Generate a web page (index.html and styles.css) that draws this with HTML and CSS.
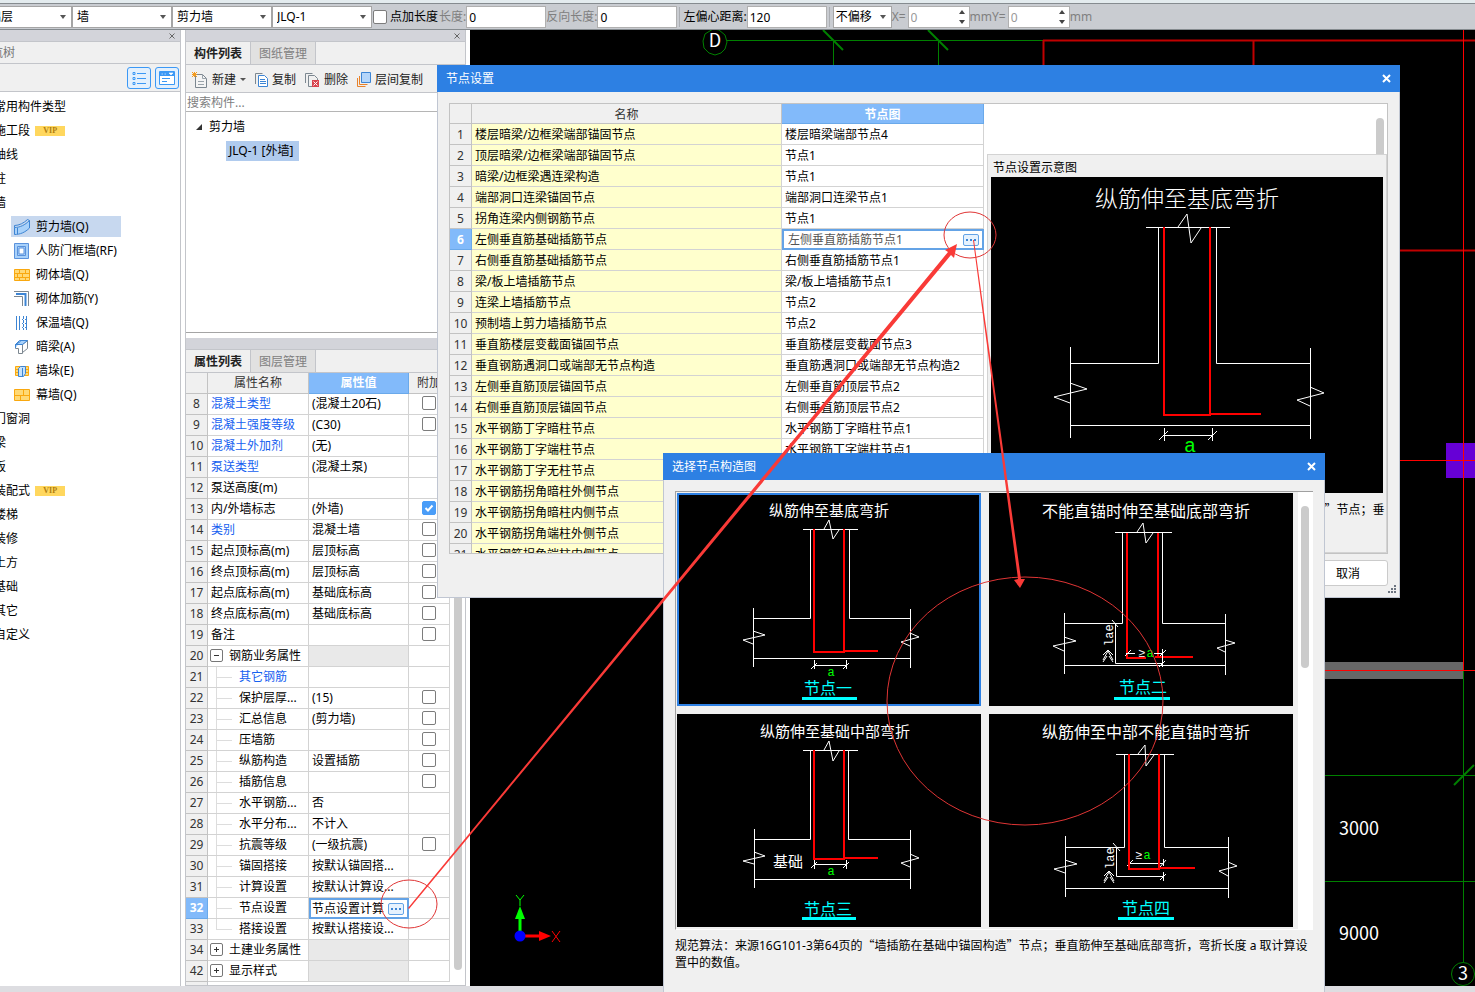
FILE: index.html
```html
<!DOCTYPE html>
<html lang="zh-CN">
<head>
    <meta charset="utf-8">
    <title>节点设置</title>
    <link rel="stylesheet" href="styles.css">
</head>
<body>
    <div class="toolbar">
        <select class="combo" aria-label="楼层"><option>基础层</option></select>
        <select class="combo" aria-label="构件大类"><option>墙</option></select>
        <select class="combo" aria-label="构件类型"><option>剪力墙</option></select>
        <select class="combo" aria-label="构件"><option>JLQ-1</option></select>
        <label class="tick-label"><input type="checkbox" class="tick">点加长度</label>
        <label class="field off">长度:<input type="text" value="0"></label>
        <label class="field off">反向长度:<input type="text" value="0"></label>
        <span class="sep"></span>
        <label class="field">左偏心距离:<input type="text" value="120"></label>
        <span class="sep"></span>
        <select class="combo combo-small" aria-label="偏移"><option>不偏移</option></select>
        <label class="field off">X=<input type="text" class="spin" value="0"></label>
        <label class="field off">mmY=<input type="text" class="spin" value="0"></label>
        <span class="off">mm</span>
    </div>

    <div class="workspace">
        <nav class="dock nav">
            <div class="dock-bar"><button class="dock-close" aria-label="关闭"><svg width="6" height="6"><path d="M0.5 0.5L5.5 5.5M5.5 0.5L0.5 5.5"/></svg></button></div>
            <div class="dock-title">导航树</div>
            <div class="nav-tools">
                <button class="view-btn" aria-label="列表"><svg width="14" height="16" viewBox="0 0 14 16"><path d="M1 2.5h2v2h-2zM1 7.5h2v2h-2zM1 12.5h2v2h-2zM5 3.5h9M5 8.5h9M5 13.5h9" fill="none" stroke="#3b98f5"/></svg></button>
                <button class="view-btn" aria-label="面板"><svg width="16" height="14" viewBox="0 0 16 14"><path d="M.5 .5h15v13h-15z" fill="#fff" stroke="#3b98f5"/><path d="M1 1h14v4H1z" fill="#3b98f5"/><path d="M2.500 3h1.500M5.500 3h1.500M10 2h4l-2 2z" stroke="#fff" fill="#fff" stroke-width=".6"/><path d="M3 7.500h8M3 10.500h5" stroke="#3b98f5"/></svg></button>
            </div>
            <ul class="nav-list">
                <li>常用构件类型</li>
                <li>施工段 <b class="vip">VIP</b></li>
                <li>轴线</li>
                <li class="one">柱</li>
                <li class="one">墙</li>
                <li class="sub selected"><a href="#"><svg width="16" height="16" viewBox="0 0 16 16"><path d="M.5 8.500C6 8.500 11 6 15.500 1.500V9C11 13.500 6 15.500 .5 15.500z" fill="#a8d1fa" stroke="#3d85d4"/><path d="M.5 8.500v-2C5 6.500 10 4 13.500 .5l2 1M3.500 9v6" fill="none" stroke="#3d85d4"/></svg>剪力墙(Q)</a></li>
                <li class="sub"><a href="#"><svg width="16" height="16" viewBox="0 0 16 16"><path d="M.5 .5h14v15H.5z" fill="#a8d1fa" stroke="#5a92dc"/><path d="M3.500 3.500h8v9h-8z" fill="#a8d1fa" stroke="#5a92dc"/><path d="M5 5h5v6H5z" fill="#fff" stroke="#5a92dc"/></svg>人防门框墙(RF)</a></li>
                <li class="sub"><a href="#"><svg width="16" height="16" viewBox="0 0 16 16"><path d="M.5 2.500h15v11H.5z" fill="#ffd975" stroke="#f9a80f"/><path d="M0 6.500h16M0 10.500h16M5.500 2v4M11.500 2v4M3.500 6v4M8.500 6v4M5.500 10v4M11.500 10v4" stroke="#f9a80f"/></svg>砌体墙(Q)</a></li>
                <li class="sub"><a href="#"><svg width="16" height="16" viewBox="0 0 16 16"><path d="M0 .5h14.500V15M0 5.500h8.500V15" fill="none" stroke="#7c8790"/><path d="M2 3h9.500V15" fill="none" stroke="#3d85d4" stroke-width="2"/></svg>砌体加筋(Y)</a></li>
                <li class="sub"><a href="#"><svg width="16" height="16" viewBox="0 0 16 16"><path d="M2.500 1v14M12.500 1v14" stroke="#3d85d4"/><path d="M5.500 1v14M9.500 1v14" stroke="#3d85d4" stroke-dasharray="3 1"/><path d="M2 4.500h11M2 8.500h11M2 12.500h11" stroke="#3d85d4" stroke-dasharray="1 2"/></svg>保温墙(Q)</a></li>
                <li class="sub"><a href="#"><svg width="16" height="16" viewBox="0 0 16 16"><path d="M1.500 5.500h7v9h-4v-5h-3zM8.500 5.500l5-4v8l-5 4" fill="#fff" stroke="#7c8790"/><path d="M1.500 9V5.500l4-4h8l-5 4h-7l5-3" fill="#a8d1fa" stroke="#3d85d4"/></svg>暗梁(A)</a></li>
                <li class="sub"><a href="#"><svg width="16" height="16" viewBox="0 0 16 16"><path d="M1.500 3.500h13v9h-13z" fill="#ffd975" stroke="#f9a80f"/><path d="M1 6.500h14M1 9.500h14" stroke="#f9a80f"/><path d="M4.500 5.500l2-2h5v7l-2 3h-5zM8.500 5v8" fill="#c6e2fc" stroke="#3d85d4"/></svg>墙垛(E)</a></li>
                <li class="sub"><a href="#"><svg width="16" height="16" viewBox="0 0 16 16"><path d="M.5 2.500h15v11H.5z" fill="#ffd975" stroke="#f9a80f"/><path d="M0 8.500h16M9.500 2v6M6.500 8v6" stroke="#f9a80f"/></svg>幕墙(Q)</a></li>
                <li>门窗洞</li>
                <li class="one">梁</li>
                <li class="one">板</li>
                <li>装配式 <b class="vip">VIP</b></li>
                <li>楼梯</li>
                <li>装修</li>
                <li>土方</li>
                <li>基础</li>
                <li>其它</li>
                <li>自定义</li>
            </ul>
        </nav>

        <div class="column">
            <section class="dock">
                <div class="dock-bar"><button class="dock-close" aria-label="关闭"><svg width="6" height="6"><path d="M0.5 0.5L5.5 5.5M5.5 0.5L0.5 5.5"/></svg></button></div>
                <div class="tabs"><button class="tab active">构件列表</button><button class="tab">图纸管理</button></div>
                <div class="list-tools">
                    <button><svg width="16" height="16" viewBox="0 0 16 16"><path d="M3.500 2.500h7l4 4v9h-11z" fill="#f4f4f4" stroke="#7c8790"/><path d="M10.500 2.500v4h4M6 9.500h6M6 12.500h6" fill="none" stroke="#9aa3aa"/><path d="M0 0l5 5M5 0L0 5M2.500 0v5M0 2.500h5" stroke="#f39a1e"/></svg>新建<i class="caret"></i></button>
                    <button><svg width="13" height="16" viewBox="0 0 13 16"><path d="M.5 12V1.500h7" fill="none" stroke="#7c8790"/><path d="M3.500 3.500h6l3 3v8h-9z" fill="#fff" stroke="#3d85d4"/><path d="M5 7.500h5M5 9.500h6M5 11.500h6" stroke="#3d85d4"/></svg>复制</button>
                    <button><svg width="15" height="16" viewBox="0 0 15 16"><path d="M.5 11V1.500h7M7 14.500H3.500v-11h6l3 3V8" fill="none" stroke="#7c8790"/><path d="M7 8h7v7H7z" fill="#d9434e"/><path d="M8.500 9.500l4 4M12.500 9.500l-4 4" stroke="#fff"/></svg>删除</button>
                    <button><svg width="14" height="16" viewBox="0 0 14 16"><path d="M4.500 .5h9v10h-9z" fill="#b5d6fa" stroke="#3d85d4"/><path d="M2.500 4v8.500h8M.5 6v8.500h8" fill="none" stroke="#e8822b"/></svg>层间复制</button>
                </div>
                <input type="text" class="search" placeholder="搜索构件..." aria-label="搜索构件">
                <ul class="tree">
                    <li><i class="open"></i>剪力墙</li>
                    <li class="leaf"><span>JLQ-1 [外墙]</span></li>
                </ul>
            </section>

            <section class="dock props">
                <div class="dock-bar"></div>
                <div class="tabs"><button class="tab active">属性列表</button><button class="tab">图层管理</button></div>
                <div class="props-body">
                    <table class="grid">
                        <colgroup><col class="c-num"><col class="c-name"><col class="c-value"><col class="c-extra"></colgroup>
                        <thead><tr><th></th><th>属性名称</th><th class="current">属性值</th><th>附加</th></tr></thead>
                        <tbody>
                            <tr><th>8</th><td class="link">混凝土类型</td><td>(混凝土20石)</td><td><input type="checkbox" class="tick" aria-label="附加 8"></td></tr>
                            <tr><th>9</th><td class="link">混凝土强度等级</td><td>(C30)</td><td><input type="checkbox" class="tick" aria-label="附加 9"></td></tr>
                            <tr><th>10</th><td class="link">混凝土外加剂</td><td>(无)</td><td></td></tr>
                            <tr><th>11</th><td class="link">泵送类型</td><td>(混凝土泵)</td><td></td></tr>
                            <tr><th>12</th><td>泵送高度(m)</td><td></td><td></td></tr>
                            <tr><th>13</th><td>内/外墙标志</td><td>(外墙)</td><td><input type="checkbox" class="tick" checked aria-label="附加 13"></td></tr>
                            <tr><th>14</th><td class="link">类别</td><td>混凝土墙</td><td><input type="checkbox" class="tick" aria-label="附加 14"></td></tr>
                            <tr><th>15</th><td>起点顶标高(m)</td><td>层顶标高</td><td><input type="checkbox" class="tick" aria-label="附加 15"></td></tr>
                            <tr><th>16</th><td>终点顶标高(m)</td><td>层顶标高</td><td><input type="checkbox" class="tick" aria-label="附加 16"></td></tr>
                            <tr><th>17</th><td>起点底标高(m)</td><td>基础底标高</td><td><input type="checkbox" class="tick" aria-label="附加 17"></td></tr>
                            <tr><th>18</th><td>终点底标高(m)</td><td>基础底标高</td><td><input type="checkbox" class="tick" aria-label="附加 18"></td></tr>
                            <tr><th>19</th><td>备注</td><td></td><td><input type="checkbox" class="tick" aria-label="附加 19"></td></tr>
                            <tr class="group"><th>20</th><td><button class="fold minus" aria-label="收起"></button>钢筋业务属性</td><td></td><td></td></tr>
                            <tr class="child"><th>21</th><td class="link">其它钢筋</td><td></td><td></td></tr>
                            <tr class="child"><th>22</th><td>保护层厚...</td><td>(15)</td><td><input type="checkbox" class="tick" aria-label="附加 22"></td></tr>
                            <tr class="child"><th>23</th><td>汇总信息</td><td>(剪力墙)</td><td><input type="checkbox" class="tick" aria-label="附加 23"></td></tr>
                            <tr class="child"><th>24</th><td>压墙筋</td><td></td><td><input type="checkbox" class="tick" aria-label="附加 24"></td></tr>
                            <tr class="child"><th>25</th><td>纵筋构造</td><td>设置插筋</td><td><input type="checkbox" class="tick" aria-label="附加 25"></td></tr>
                            <tr class="child"><th>26</th><td>插筋信息</td><td></td><td><input type="checkbox" class="tick" aria-label="附加 26"></td></tr>
                            <tr class="child"><th>27</th><td>水平钢筋...</td><td>否</td><td></td></tr>
                            <tr class="child"><th>28</th><td>水平分布...</td><td>不计入</td><td></td></tr>
                            <tr class="child"><th>29</th><td>抗震等级</td><td>(一级抗震)</td><td><input type="checkbox" class="tick" aria-label="附加 29"></td></tr>
                            <tr class="child"><th>30</th><td>锚固搭接</td><td>按默认锚固搭...</td><td></td></tr>
                            <tr class="child"><th>31</th><td>计算设置</td><td>按默认计算设...</td><td></td></tr>
                            <tr class="child"><th class="current">32</th><td>节点设置</td><td class="editing"><div class="editor"><span>节点设置计算</span><button class="more" aria-label="更多"></button></div></td><td></td></tr>
                            <tr class="child last"><th>33</th><td>搭接设置</td><td>按默认搭接设...</td><td></td></tr>
                            <tr class="group"><th>34</th><td><button class="fold" aria-label="展开"></button>土建业务属性</td><td></td><td></td></tr>
                            <tr class="group"><th>42</th><td><button class="fold" aria-label="展开"></button>显示样式</td><td></td><td></td></tr>
                        </tbody>
                    </table>
                    <div class="scroll"><i></i></div>
                </div>
            </section>
        </div>

        <main class="canvas">
            <svg width="100%" height="100%">
                <g fill="none" stroke="#008000">
                    <path d="M257 10.500H573M363.500 10V60M468.500 10V60" stroke-width="1"/>
                    <path d="M353 0l20 20M458 0l20 20" stroke-width="2"/>
                    <path d="M855 745.500h150M855 851.500h150M993.500 641V932"/>
                    <path d="M984 755l20-20" stroke-width="2"/>
                    <path d="M243 -1l6 1 6 5 2 7-2 7-4 4-6 2-6-2-5-5-1-7 2-7z"/>
                    <circle cx="993" cy="944" r="11.500"/>
                </g>
                <path d="M855 632h138v17H855z" fill="#666"/>
                <path d="M976 413h29v35h-29z" fill="#6600d6"/>
                <path d="M573 10.500h432M573.500 10v50M783.500 10v50M930 220.500h75" stroke="#c00000" stroke-width="2" fill="none"/>
                <path d="M993.500 0V641M930 430.500h75M855 640.500h150" stroke="#f00" fill="none"/>
                <g class="cad-label">
                    <text x="245" y="17" text-anchor="middle">D</text>
                    <text x="869" y="805">3000</text>
                    <text x="869" y="910">9000</text>
                    <text x="993" y="950" text-anchor="middle">3</text>
                </g>
                <path d="M50 906V888" stroke="#0f0" stroke-width="3"/><path d="M45 889l5-13 5 13z" fill="#0f0"/>
                <path d="M50 906h20" stroke="#f00" stroke-width="3"/><path d="M69 901l12 5-12 5z" fill="#f00"/>
                <circle cx="50" cy="906" r="5.500" fill="#00f"/>
                <path d="M46 865l4 5 4-5M50 870v6" stroke="#0f0" fill="none"/>
                <path d="M82 901l8 11M90 901l-8 11" stroke="#f00" fill="none"/>
            </svg>
        </main>
    </div>
    <footer class="status"></footer>

    <div class="dialog node-settings" role="dialog">
        <div class="dialog-title">节点设置<button aria-label="关闭"><svg width="9" height="9"><path d="M1 1l7 7M8 1L1 8"/></svg></button></div>
        <div class="node-body">
            <table class="grid nodes">
                <colgroup><col class="n-num"><col class="n-name"><col class="n-value"></colgroup>
                <thead><tr><th></th><th>名称</th><th class="current">节点图</th></tr></thead>
                <tbody>
                    <tr><th>1</th><td>楼层暗梁/边框梁端部锚固节点</td><td>楼层暗梁端部节点4</td></tr>
                    <tr><th>2</th><td>顶层暗梁/边框梁端部锚固节点</td><td>节点1</td></tr>
                    <tr><th>3</th><td>暗梁/边框梁遇连梁构造</td><td>节点1</td></tr>
                    <tr><th>4</th><td>端部洞口连梁锚固节点</td><td>端部洞口连梁节点1</td></tr>
                    <tr><th>5</th><td>拐角连梁内侧钢筋节点</td><td>节点1</td></tr>
                    <tr><th class="current">6</th><td>左侧垂直筋基础插筋节点</td><td class="editing"><div class="editor"><input type="text" value="左侧垂直筋插筋节点1" aria-label="节点图"><button class="more" aria-label="选择节点"></button></div></td></tr>
                    <tr><th>7</th><td>右侧垂直筋基础插筋节点</td><td>右侧垂直筋插筋节点1</td></tr>
                    <tr><th>8</th><td>梁/板上墙插筋节点</td><td>梁/板上墙插筋节点1</td></tr>
                    <tr><th>9</th><td>连梁上墙插筋节点</td><td>节点2</td></tr>
                    <tr><th>10</th><td>预制墙上剪力墙插筋节点</td><td>节点2</td></tr>
                    <tr><th>11</th><td>垂直筋楼层变截面锚固节点</td><td>垂直筋楼层变截面节点3</td></tr>
                    <tr><th>12</th><td>垂直钢筋遇洞口或端部无节点构造</td><td>垂直筋遇洞口或端部无节点构造2</td></tr>
                    <tr><th>13</th><td>左侧垂直筋顶层锚固节点</td><td>左侧垂直筋顶层节点2</td></tr>
                    <tr><th>14</th><td>右侧垂直筋顶层锚固节点</td><td>右侧垂直筋顶层节点2</td></tr>
                    <tr><th>15</th><td>水平钢筋丁字暗柱节点</td><td>水平钢筋丁字暗柱节点1</td></tr>
                    <tr><th>16</th><td>水平钢筋丁字端柱节点</td><td>水平钢筋丁字端柱节点1</td></tr>
                    <tr><th>17</th><td>水平钢筋丁字无柱节点</td><td></td></tr>
                    <tr><th>18</th><td>水平钢筋拐角暗柱外侧节点</td><td></td></tr>
                    <tr><th>19</th><td>水平钢筋拐角暗柱内侧节点</td><td></td></tr>
                    <tr><th>20</th><td>水平钢筋拐角端柱外侧节点</td><td></td></tr>
                    <tr><th>21</th><td>水平钢筋拐角端柱内侧节点</td><td></td></tr>
                </tbody>
            </table>
            <div class="side">
                <div class="side-scroll"><i></i></div>
                <div class="preview">
                    <h3>节点设置示意图</h3>
                    <svg viewBox="0 0 392 316">
                        <text class="cad-title big" x="196" y="30">纵筋伸至基底弯折</text>
                        <g class="w"><path d="M155 50.500h84M167.500 50V186.500H79.500M225.500 50V186.500H319.500M79.500 170v91M319.500 171v91M79.500 248.500h240"/><path d="M187 50l9-13 4 29 10-15M79 206l17 6-33 8 16 6M319 210l14 6-27 7 13 6"/><path d="M173.500 251v13M221.500 251v13M173.500 258.500h48M168 263l9-9M217 263l9-9"/></g>
                        <path class="r" d="M173 50V238H219V50M219 237h51"/>
                        <text class="dim big" x="199" y="275">a</text>
                    </svg>
                    <p>规范算法：来源16G101-3第64页的<span class="quote">“</span>墙插筋在基础中锚固构造<span class="quote">”</span>节点；垂直筋伸至基础底部弯折，弯折长度 a 取计算设置中的数值。</p>
                </div>
            </div>
        </div>
        <div class="dialog-foot"><button class="btn">取消</button></div>
        <svg class="grip" width="9" height="9"><path d="M6 0h2v2h-2zM3 3h2v2h-2zM6 3h2v2h-2zM0 6h2v2h-2zM3 6h2v2h-2zM6 6h2v2h-2z" fill="#6c7480"/></svg>
    </div>

    <div class="dialog node-picker" role="dialog">
        <div class="dialog-title">选择节点构造图<button aria-label="关闭"><svg width="9" height="9"><path d="M1 1l7 7M8 1L1 8"/></svg></button></div>
        <div class="picker-body">
            <div class="cards">
                <div class="card selected">
                    <svg viewBox="0 0 304 213">
                        <text class="cad-title" x="152" y="23">纵筋伸至基底弯折</text>
                        <g class="w"><path d="M126 36.500h55M133.500 36V125.500H76.500M172.500 36V125.500H233.500M76.500 115v59M233.500 116v59M76.500 165.500h157"/><path d="M147 36l5-9 4 19 6-9M76 138l12 4-22 5 10 4M233 140l9 4-18 5 9 4"/><path d="M137.500 167v9M169.500 167v9M137 172.500h32M134 176l6-6M166 176l6-6"/></g>
                        <path class="r" d="M137 36V159H167V36M167 158h34"/>
                        <text class="dim" x="154" y="183">a</text>
                        <text class="cad-name" x="151" y="201">节点一</text>
                        <path class="bar" d="M125 204h55v3h-55z"/>
                    </svg>
                </div>
                <div class="card">
                    <svg viewBox="0 0 304 213">
                        <text class="cad-title wide" x="157" y="24">不能直锚时伸至基础底部弯折</text>
                        <path class="r" d="M138 39V165H157M166 164H204M169 39V164"/>
                        <g class="w"><path d="M126 39.500h57M133.500 39V130.500H75.500M173.500 39V130.500H236.500M75.500 120v61M236.500 121v61M75.500 172.500h161"/><path d="M148 39l6-9 3 20 7-10M75 144l12 4-23 5 11 5M236 147l10 3-18 5 8 4"/><path d="M126.500 130V170.500H173.500M173.500 156v18M123 127l6 7M170 174l6-6M137 160.500h9M165 160.500h9M136 163l6-6M171 163l6-6"/></g>
                        <text class="lae" transform="translate(124 153) rotate(-90)">lae</text>
                        <path class="w" d="M114 167l5-9 5 9M114 162l5-5 5 5M114 169l4-6M124 169l-4-6"/>
                        <text class="small-ge" x="149" y="164">≥</text><text class="dim" x="161" y="164">a</text>
                        <text class="cad-name" x="154" y="200">节点二</text>
                        <path class="bar" d="M125 204h56v3h-56z"/>
                    </svg>
                </div>
                <div class="card">
                    <svg viewBox="0 0 304 213">
                        <text class="cad-title" x="158" y="23">纵筋伸至基础中部弯折</text>
                        <g class="w"><path d="M126 36.500h55M133.500 36V125.500H77.500M171.500 36V125.500H233.500M77.500 115v59M233.500 116v59M77.500 165.500h156"/><path d="M147 36l5-9 4 20 6-10M77 138l11 4-22 5 11 3M233 140l9 4-18 5 9 4"/><path d="M137.500 146v9M169.500 146v9M137 150.500h32M134 154l6-6M166 154l6-6"/></g>
                        <path class="r" d="M137 36V145H167V36M167 144h34"/>
                        <text class="cad-title" x="111" y="153">基础</text>
                        <text class="dim" x="154" y="161">a</text>
                        <text class="cad-name" x="151" y="201">节点三</text>
                        <path class="bar" d="M125 203h54v3h-54z"/>
                    </svg>
                </div>
                <div class="card">
                    <svg viewBox="0 0 304 213">
                        <text class="cad-title wide" x="157" y="24">纵筋伸至中部不能直锚时弯折</text>
                        <g class="w"><path d="M127 40.500h58M135.500 40V133.500H76.500M175.500 40V133.500H239.500M76.500 122v61M239.500 123v61M76.500 174.500h163"/><path d="M149 40l7-9 1 21 8-11M76 146l12 4-23 5 11 4M239 148l9 4-18 5 9 5"/><path d="M127.500 133V162.500H174.500M174.500 145v7M174.500 158v9M124 129l7 8M171 166l6-6M140 149.500h35M138 152l6-6M171 153l6-7"/></g>
                        <path class="r" d="M140 40V155H170V40M170 154h36"/>
                        <text class="lae" transform="translate(125 155) rotate(-90)">lae</text>
                        <path class="w" d="M115 167l5-9 5 9M115 162l5-5 5 5M115 169l4-6M125 169l-4-6"/>
                        <text class="small-ge" x="146" y="145">≥</text><text class="dim" x="158" y="145">a</text>
                        <text class="cad-name" x="157" y="200">节点四</text>
                        <path class="bar" d="M129 203h56v3h-56z"/>
                    </svg>
                </div>
            </div>
            <div class="picker-scroll"><i></i></div>
        </div>
        <p class="rule">规范算法：来源16G101-3第64页的<span class="quote">“</span>墙插筋在基础中锚固构造<span class="quote">”</span>节点；垂直筋伸至基础底部弯折，弯折长度 a 取计算设置中的数值。</p>
    </div>

    <svg class="marks" aria-hidden="true">
        <ellipse cx="409" cy="904" rx="28" ry="24"/>
        <ellipse cx="970" cy="235" rx="26" ry="23"/>
        <ellipse cx="1025" cy="701" rx="138" ry="124"/>
        <path d="M408 908L948 252 945 250 957 244 954 258 951 255 409 909z"/>
        <path d="M973 240L1018 579 1014 580 1020 588 1025 579 1021 579 974 240z"/>
    </svg>
</body>
</html>
```
FILE: styles.css
```css
* {
    box-sizing: border-box;
}
body {
    margin: 0;
    height: 100vh;
    display: flex;
    flex-direction: column;
    overflow: hidden;
    background: #fff;
    color: #000;
    font: 12px/20px "Noto Sans", "Noto Sans CJK SC", sans-serif;
}
button, input, select {
    font: inherit;
    color: inherit;
    margin: 0;
}
button {
    border: 0;
    padding: 0;
    background: none;
}
ul, p, h3 {
    margin: 0;
    padding: 0;
    list-style: none;
    font-weight: normal;
    font-size: 12px;
}
i {
    display: block;
}

/* top toolbar */
.toolbar {
    flex: none;
    display: flex;
    align-items: center;
    height: 30px;
    padding-top: 3px;
    margin-left: -28px;
    border-top: 3px solid #e3ebee;
    border-bottom: 1px solid #858b8f;
    background: #c9ccd1;
    box-shadow: inset 0 1px #858b8f;
    padding-bottom: 1px;
    white-space: nowrap;
}
.combo {
    appearance: none;
    width: 100px;
    height: 22px;
    padding: 0 4px;
    border: 1px solid #a5a5a5;
    border-radius: 0;
    background: #fff url("data:image/svg+xml,%3Csvg xmlns='http://www.w3.org/2000/svg' width='6' height='4'%3E%3Cpath d='M0 0h6L3 4z' fill='%23555'/%3E%3C/svg%3E") no-repeat right 5px center;
}
.combo-small {
    width: 59px;
    padding: 0 2px;
}
.tick-label {
    display: flex;
    align-items: center;
    gap: 3px;
    margin-left: 1px;
}
.tick {
    appearance: none;
    display: block;
    width: 14px;
    height: 14px;
    border: 1px solid #7c7c7c;
    border-radius: 2px;
    background: #fff;
}
.tick:checked {
    border-color: #4a9df8;
    background: #4a9df8 url("data:image/svg+xml,%3Csvg xmlns='http://www.w3.org/2000/svg' width='12' height='12'%3E%3Cpath d='M2.500 6l2.500 2.500 4.500-5' fill='none' stroke='white' stroke-width='2'/%3E%3C/svg%3E") no-repeat center;
}
.field {
    display: flex;
    align-items: center;
}
.tick-label + .field {
    margin-left: 1px;
}
.field input {
    width: 80px;
    height: 22px;
    padding: 0 2px;
    border: 1px solid #b0b0b0;
    color: #000;
}
.off {
    color: #808080;
}
.field .spin {
    width: 62px;
    margin-left: 2px;
    color: #999;
    background: #fff url("data:image/svg+xml,%3Csvg xmlns='http://www.w3.org/2000/svg' width='6' height='14'%3E%3Cpath d='M0 4h6L3 0zM0 10h6l-3 4z' fill='%23444'/%3E%3C/svg%3E") no-repeat right 4px center;
}
.sep {
    width: 1px;
    height: 20px;
    margin: 0 3px 0 2px;
    background: #aaadb2;
}

/* docked panels */
.workspace {
    flex: 1;
    display: flex;
    min-height: 0;
}
.dock {
    background: #f0f0f0;
}
.dock-bar {
    height: 12px;
    padding-right: 5px;
    text-align: right;
    line-height: 10px;
    background: #d3d4da;
    border-bottom: 1px solid #c3c5ca;
}
.dock-close svg {
    display: block;
    margin-top: 3px;
    stroke: #666;
}
.nav {
    flex: none;
    width: 181px;
    border-right: 1px solid #c3c5ca;
    background: #fff;
    overflow: hidden;
    white-space: nowrap;
}
.dock-title {
    height: 22px;
    margin-left: -21px;
    line-height: 22px;
    color: #777;
    background: #f0f0f0;
    border-bottom: 1px solid #c3c5ca;
}
.nav-tools {
    display: flex;
    justify-content: flex-end;
    align-items: center;
    gap: 4px;
    height: 28px;
    padding-right: 1px;
    background: #f0f0f0;
    border-bottom: 1px solid #c3c5ca;
}
.view-btn {
    display: flex;
    align-items: center;
    justify-content: center;
    width: 24px;
    height: 22px;
    border: 1px solid #3b98f5;
    border-radius: 3px;
    background: #e3f0fd;
}
.nav-list {
    padding-top: 2px;
    margin-left: -6px;
}
.nav-list li {
    height: 24px;
    line-height: 26px;
}
.nav-list .one {
    margin-left: 0;
}
.vip {
    display: inline-block;
    width: 30px;
    height: 10px;
    margin: -2px 0 0 2px;
    vertical-align: middle;
    text-align: center;
    font: bold 8px/10px "Liberation Serif", serif;
    color: #b07d10;
    background: #ffd75e;
}
.nav-list .sub a {
    display: flex;
    align-items: center;
    gap: 6px;
    width: 110px;
    height: 21px;
    margin-left: 17px;
    padding-left: 3px;
    color: #000;
    text-decoration: none;
}
.nav-list .sub {
    padding-top: 2px;
}
.nav-list .selected a {
    background: #c7d8ef;
}
.column {
    flex: none;
    display: flex;
    flex-direction: column;
    gap: 5px;
    width: 281px;
    margin: 0 4px;
    border: 1px solid #c3c5ca;
    border-top: 0;
}
.tabs {
    display: flex;
    height: 23px;
    border-bottom: 1px solid #c3c5ca;
}
.tab {
    width: 65px;
    padding-top: 1px;
    border-right: 1px solid #c3c5ca;
    background: #e1e1e1;
    color: #808080;
}
.tab.active {
    font-weight: bold;
    color: #222;
    background: #f0f0f0;
}
.list-tools {
    display: flex;
    align-items: center;
    gap: 9px;
    height: 28px;
    padding: 2px 0 0 6px;
    border-bottom: 1px solid #c3c5ca;
}
.list-tools button {
    display: flex;
    align-items: center;
    gap: 4px;
    color: #222;
}
.caret {
    width: 5px;
    border: solid transparent;
    border-width: 3px 3px 0;
    border-top-color: #555;
}
.search {
    display: block;
    width: 100%;
    height: 19px;
    padding: 2px 1px 0;
    border: 0;
    border-bottom: 1px solid #b5b5b5;
}
.search::placeholder {
    color: #808080;
}
.tree {
    height: 221px;
    padding: 3px 10px;
    background: #fff;
    border-bottom: 1px solid #a5a5a5;
}
.tree li {
    display: flex;
    align-items: center;
    gap: 7px;
    height: 24px;
}
.tree .open {
    border: solid transparent;
    border-width: 0 0 6px 6px;
    border-bottom-color: #333;
}
.tree .leaf span {
    margin-left: 30px;
    padding: 0 6px 0 3px;
    background: #b0cbee;
}
.props {
    flex: 1;
    display: flex;
    flex-direction: column;
    min-height: 0;
}
.props-body {
    flex: 1;
    display: flex;
    min-height: 0;
    overflow: hidden;
    background: linear-gradient(90deg, #f0f0f0 21px, #c3c5ca 21px, #c3c5ca 22px, #fff 22px);
}
.scroll {
    flex: 1;
    padding: 40px 3px 15px 4px;
}
.scroll i {
    height: 100%;
    border-radius: 4px;
    background: #cbcbcb;
}

/* data grids */
.grid {
    flex: none;
    table-layout: fixed;
    border-collapse: separate;
    border-spacing: 0;
    height: max-content;
    white-space: nowrap;
    background: #fff;
}
.grid th, .grid td {
    height: 21px;
    padding: 0 3px;
    border-right: 1px solid #d3d3d3;
    border-bottom: 1px solid #d3d3d3;
    line-height: 20px;
    overflow: hidden;
}
.grid th {
    padding: 0;
    font-weight: normal;
    color: #333;
    background: #f0f0f0;
    border-color: #c3c3c3;
}
.grid .current {
    font-weight: bold;
    color: #fff;
    background: #82bafa;
    border-color: #6aa9ea;
}
.c-num { width: 22px; }
.c-name { width: 101px; }
.c-value { width: 100px; }
.c-extra { width: 41px; }
.props .grid {
    width: 264px;
}
.grid .link {
    color: #1560f0;
}
.grid td .tick {
    margin: 0 0 2px 10px;
}
.grid .group td:nth-child(3) {
    background: #e9e9e9;
}
.fold {
    display: inline-block;
    width: 13px;
    height: 13px;
    margin: 0 6px 0 -1px;
    vertical-align: -1px;
    border: 1px solid #777;
    border-radius: 2px;
    background: linear-gradient(#333, #333) center / 5px 1px no-repeat, linear-gradient(#333, #333) center / 1px 5px no-repeat, #fff;
}
.fold.minus {
    background: linear-gradient(#333, #333) center / 5px 1px no-repeat, #fff;
}
.grid .child td:nth-child(2) {
    padding-left: 31px;
    background: linear-gradient(#ddd, #ddd) 8px 0 / 1px 100% no-repeat, linear-gradient(#ddd, #ddd) 8px 50% / 16px 1px no-repeat;
}
.grid .last td:nth-child(2) {
    background-size: 1px 50%, 16px 1px;
}
.grid .editing {
    padding: 0;
    border: 0;
}
.editor {
    display: flex;
    align-items: center;
    height: 21px;
    padding: 0 3px 0 1px;
    border: 2px solid #64a3e6;
    background: #fff;
}
.editor span, .editor input {
    flex: 1;
    min-width: 0;
    height: 17px;
    padding: 0;
    line-height: 17px;
    border: 0;
    overflow: hidden;
}
.editor input {
    padding-left: 3px;
    color: #555;
}
.more {
    flex: none;
    width: 16px;
    height: 12px;
    margin-left: 4px;
    border: 1px solid #64a3e6;
    border-radius: 2px;
    background: radial-gradient(circle, #3d85d4 1px, transparent 1px) 1px 0 / 4px 10px repeat-x, #e6f2fe;
    background-clip: content-box, border-box;
}

/* drawing area */
.canvas {
    flex: 1;
    min-width: 0;
    background: #000;
}
.canvas svg {
    display: block;
}
.cad-label {
    font-family: "Noto Sans CJK SC", sans-serif;
    font-size: 18px;
    fill: #fff;
}
.status {
    flex: none;
    height: 6px;
    background: #dddde1;
}

/* dialogs */
.dialog {
    position: absolute;
    display: flex;
    flex-direction: column;
    background: #f0f0f0;
    border: 1px solid #c0c6d2;
    border-top: 0;
}
.dialog-title {
    flex: none;
    display: flex;
    align-items: center;
    justify-content: space-between;
    height: 27px;
    margin: 0 -1px;
    padding: 0 9px;
    color: #fff;
    background: #2d80e3;
}
.dialog-title svg {
    display: block;
    stroke: #fff;
    stroke-width: 2;
}
.node-settings {
    left: 437px;
    top: 65px;
    width: 963px;
    height: 533px;
}
.node-body {
    display: flex;
    height: 451px;
    margin: 11px 11px 0;
    border: 1px solid #c3c3c3;
    background: #fff;
    overflow: hidden;
}
.nodes {
    width: 534px;
}
.nodes th, .nodes td:not(.editing) {
    padding-top: 2px;
    line-height: 18px;
}
.nodes thead th {
    height: 20px;
    line-height: 17px;
}
.n-num { width: 22px; }
.n-name { width: 310px; }
.n-value { width: 202px; }
.nodes td:nth-child(2) {
    background: #ffffcd;
}
.side {
    flex: 1;
    display: flex;
    flex-direction: column;
    min-width: 0;
    padding-left: 3px;
}
.side-scroll {
    flex: none;
    height: 50px;
    padding: 14px 3px 0;
}
.side-scroll i {
    width: 8px;
    height: 36px;
    margin-left: auto;
    border-radius: 4px 4px 0 0;
    background: #cbcbcb;
}
.preview {
    flex: 1;
    padding: 0 3px;
    border: 1px solid #d3d3d3;
    background: #f0f0f0;
}
.preview h3 {
    height: 22px;
    padding: 3px 2px 0;
    line-height: 19px;
}
.preview svg {
    display: block;
    width: 100%;
    background: #000;
}
.preview p, .rule {
    line-height: 17px;
}
.quote {
    font-family: "Noto Sans CJK SC", sans-serif;
}
.preview p {
    padding: 7px 0 0 2px;
    margin-right: -3px;
}
.dialog-foot {
    display: flex;
    justify-content: flex-end;
    padding: 6px 11px;
}
.btn {
    width: 80px;
    height: 26px;
    padding-top: 1px;
    border: 1px solid #cbcbcb;
    border-radius: 3px;
    background: #fff;
}
.grip {
    position: absolute;
    right: 2px;
    bottom: 3px;
}
.node-picker {
    left: 663px;
    top: 453px;
    bottom: 0;
    width: 662px;
    border-bottom: 0;
}
.picker-body {
    display: flex;
    height: 439px;
    margin: 11px 11px 0;
    border-top: 1px solid #a0a0a0;
    border-left: 1px solid #a0a0a0;
    border-bottom: 1px solid #fff;
    overflow: hidden;
}
.cards {
    flex: 1;
    display: grid;
    grid-template-columns: 1fr 1fr;
    grid-auto-rows: 213px;
    gap: 8px;
    padding: 1px 5px 0 1px;
}
.card {
    background: #000;
    overflow: hidden;
}
.card svg {
    display: block;
    width: 100%;
}
.card.selected {
    box-shadow: inset 0 0 0 2px #2d80e3;
}
.picker-scroll {
    flex: none;
    width: 15px;
    padding: 14px 4px 0 3px;
    background: #fff;
}
.picker-scroll i {
    height: 162px;
    border-radius: 4px;
    background: #cbcbcb;
}
.rule {
    margin: 6px 11px 0;
}

/* node drawings */
.w {
    fill: none;
    stroke: #fff;
}
.r {
    fill: none;
    stroke: #f00;
    stroke-width: 2;
}
.bar {
    fill: #0ff;
}
.cad-title, .cad-name {
    font-family: "Noto Sans CJK SC", sans-serif;
    text-anchor: middle;
}
.cad-title {
    font-size: 15px;
    fill: #fff;
}
.cad-title.wide {
    font-size: 16px;
}
.cad-title.big {
    font-size: 23px;
    font-weight: 300;
}
.cad-name {
    font-size: 16px;
    fill: #0ff;
}
.dim, .lae, .small-ge {
    font-family: "Liberation Mono", monospace;
    font-size: 12px;
    fill: #fff;
}
.dim {
    fill: #0f0;
    text-anchor: middle;
}
.dim.big {
    font-size: 20px;
}

/* callouts over the windows */
.marks {
    position: absolute;
    left: 0;
    top: 0;
    width: 100%;
    height: 100%;
    pointer-events: none;
    fill: #f93a37;
}
.marks ellipse {
    fill: none;
    stroke: #e03535;
}
```
